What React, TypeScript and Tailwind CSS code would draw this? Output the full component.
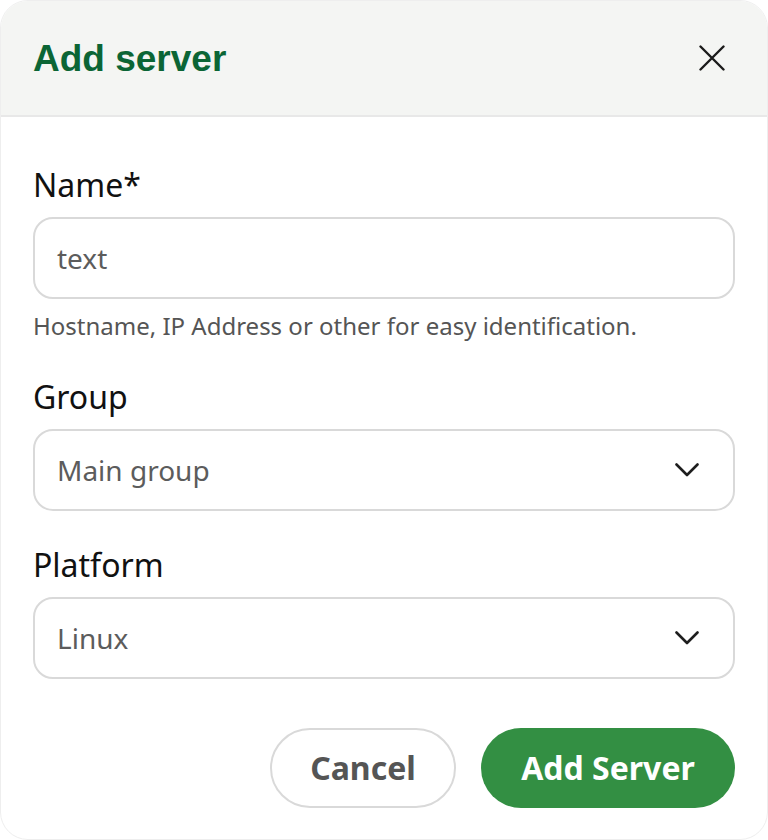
function Chevron() {
  return (
    <svg width="24" height="14" viewBox="0 0 24 14" fill="none" className="text-[#1e1e1e]">
      <polyline points="1.5,1.5 12,12 22.5,1.5" stroke="currentColor" strokeWidth="2.6" strokeLinecap="round" strokeLinejoin="round" />
    </svg>
  );
}

function Select({ value }: { value: string }) {
  return (
    <div className="h-[82px] rounded-[20px] border-2 border-[#d9d9d9] flex items-center justify-between pl-[22px] pr-[34px]">
      <span className="text-[28px] text-[#5c5c5c]">{value}</span>
      <Chevron />
    </div>
  );
}

export default function App() {
  return (
    <div className="w-[768px] h-[840px] bg-white">
      <div
        className="w-full h-full rounded-[28px] overflow-hidden bg-white border border-[#eeeeee] flex flex-col"
        style={{ fontFamily: '"Noto Sans", "Open Sans", sans-serif' }}
      >
        {/* Header */}
        <div className="h-[116px] shrink-0 bg-[#f4f5f3] border-b-2 border-[#e8e8e8] flex items-center justify-between pl-[32px] pr-[42px]">
          <h1
            className="text-[37px] font-bold text-[#0b6535] leading-none"
            style={{ fontFamily: '"Liberation Sans", Arial, sans-serif' }}
          >
            Add server
          </h1>
          <svg width="26" height="26" viewBox="0 0 26 26" fill="none" className="text-[#1a1a1a]">
            <path d="M1.5 1.5 24.5 24.5M24.5 1.5 1.5 24.5" stroke="currentColor" strokeWidth="2.4" strokeLinecap="round" />
          </svg>
        </div>

        {/* Body */}
        <div className="flex-1 px-[32px] pt-[48px] flex flex-col">
          <label className="text-[32px] text-[#111] leading-[40px]">Name*</label>
          <div className="mt-[12px] h-[82px] rounded-[20px] border-2 border-[#d9d9d9] flex items-center pl-[22px]">
            <span className="text-[28px] text-[#5c5c5c]">text</span>
          </div>
          <p className="mt-[12px] text-[24px] text-[#555] leading-[30px]">
            Hostname, IP Address or other for easy identification.
          </p>

          <label className="mt-[36px] text-[32px] text-[#111] leading-[40px]">Group</label>
          <div className="mt-[12px]">
            <Select value="Main group" />
          </div>

          <label className="mt-[34px] text-[32px] text-[#111] leading-[40px]">Platform</label>
          <div className="mt-[12px]">
            <Select value="Linux" />
          </div>

          <div className="mt-[49px] flex justify-end gap-[25px]">
            <button className="h-[80px] w-[186px] rounded-full border-2 border-[#d9d9d9] text-[32px] font-bold text-[#555]">
              Cancel
            </button>
            <button className="h-[80px] w-[254px] rounded-full bg-[#338f43] text-[32px] font-bold text-white">
              Add Server
            </button>
          </div>
        </div>
      </div>
    </div>
  );
}
